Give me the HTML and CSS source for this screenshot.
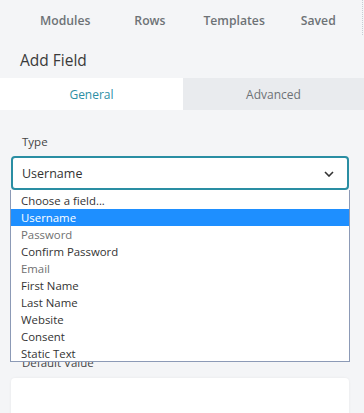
FILE: index.html
```html
<!DOCTYPE html>
<html>
<head>
<meta charset="utf-8">
<link rel="stylesheet" href="styles.css">
</head>
<body>
<div class="panel">
  <nav class="topnav">
    <span class="navitem">Modules</span>
    <span class="navitem">Rows</span>
    <span class="navitem">Templates</span>
    <span class="navitem">Saved</span>
    <span class="dots"></span>
  </nav>
  <h1 class="title">Add Field</h1>
  <div class="tabs">
    <div class="tab active">General</div>
    <div class="tab">Advanced</div>
  </div>
  <div class="body">
    <div class="field">
      <label class="label">Type</label>
      <div class="select">
        <span>Username</span>
        <svg class="chev" width="10" height="6" viewBox="0 0 10 6"><path d="M1 1l4 4 4-4" fill="none" stroke="#333" stroke-width="1.6"/></svg>
      </div>
      <ul class="list">
        <li>Choose a field...</li>
        <li class="sel">Username</li>
        <li class="dis">Password</li>
        <li>Confirm Password</li>
        <li class="dis">Email</li>
        <li>First Name</li>
        <li>Last Name</li>
        <li>Website</li>
        <li>Consent</li>
        <li>Static Text</li>
      </ul>
    </div>
    <div class="spacer"></div>
    <div class="field">
      <label class="label">Default Value</label>
      <div class="input"></div>
    </div>
  </div>
</div>
</body>
</html>
```

FILE: styles.css
```css
* { box-sizing: border-box; }
html, body { margin: 0; padding: 0; }
body {
  width: 364px;
  height: 413px;
  overflow: hidden;
  background: #f4f5f7;
  font-family: "Open Sans", "Noto Sans", sans-serif;
  color: #333;
}
.panel { position: relative; }
.topnav {
  height: 40px;
  display: flex;
  align-items: center;
  padding-left: 40px;
  position: relative;
}
.navitem {
  font-size: 12.2px;
  font-weight: 600;
  color: #6d7276;
}
.navitem:nth-child(1) { margin-right: 44px; }
.navitem:nth-child(2) { margin-right: 38px; }
.navitem:nth-child(3) { margin-right: 36px; }
.dots {
  position: absolute;
  right: 1px;
  top: 0;
  height: 35px;
  border-left: 1px dotted #c8ccd2;
}
.title {
  margin: 0;
  height: 38px;
  padding-left: 20px;
  font-size: 15.5px;
  font-weight: 400;
  color: #3a3a3a;
  line-height: 40px;
}
.tabs {
  display: flex;
  height: 32px;
}
.tab {
  flex: 0 0 181px;
  display: flex;
  align-items: center;
  justify-content: center;
  font-size: 12px;
  color: #6d7276;
  background: #e9ebee;
}
.tab.active {
  flex: 0 0 183px;
  background: #fff;
  color: #2c8fa5;
}
.body {
  padding: 24px 15px 0 11px;
}
.field { position: relative; }
.label {
  display: block;
  font-size: 11.5px;
  color: #444;
  padding-left: 11px;
  height: 22px;
  line-height: 16px;
}
.select {
  height: 34px;
  border: 2px solid #2a8ea3;
  border-radius: 4px;
  background: #fff;
  display: flex;
  align-items: center;
  justify-content: space-between;
  padding: 0 13px 0 9px;
  font-size: 12.5px;
  color: #333;
}
.chev { margin-top: 1px; }
.list {
  position: absolute;
  left: -1px;
  right: -1px;
  top: 56px;
  margin: 0;
  padding: 2px 0 0;
  list-style: none;
  background: #fff;
  border: 1px solid #8c9ab6;
  border-top: none;
  z-index: 2;
  height: 172px;
}
.list li {
  height: 17px;
  line-height: 17px;
  font-size: 11.4px;
  padding-left: 10px;
  color: #333;
}
.list li.sel { background: #1e8fff; color: #fff; }
.list li.dis { color: #707070; }
.spacer { height: 165px; }
.input {
  height: 50px;
  background: #fff;
  border-radius: 4px;
  box-shadow: 0 0 3px rgba(0,0,0,0.06);
  margin-top: 1px;
}
```
